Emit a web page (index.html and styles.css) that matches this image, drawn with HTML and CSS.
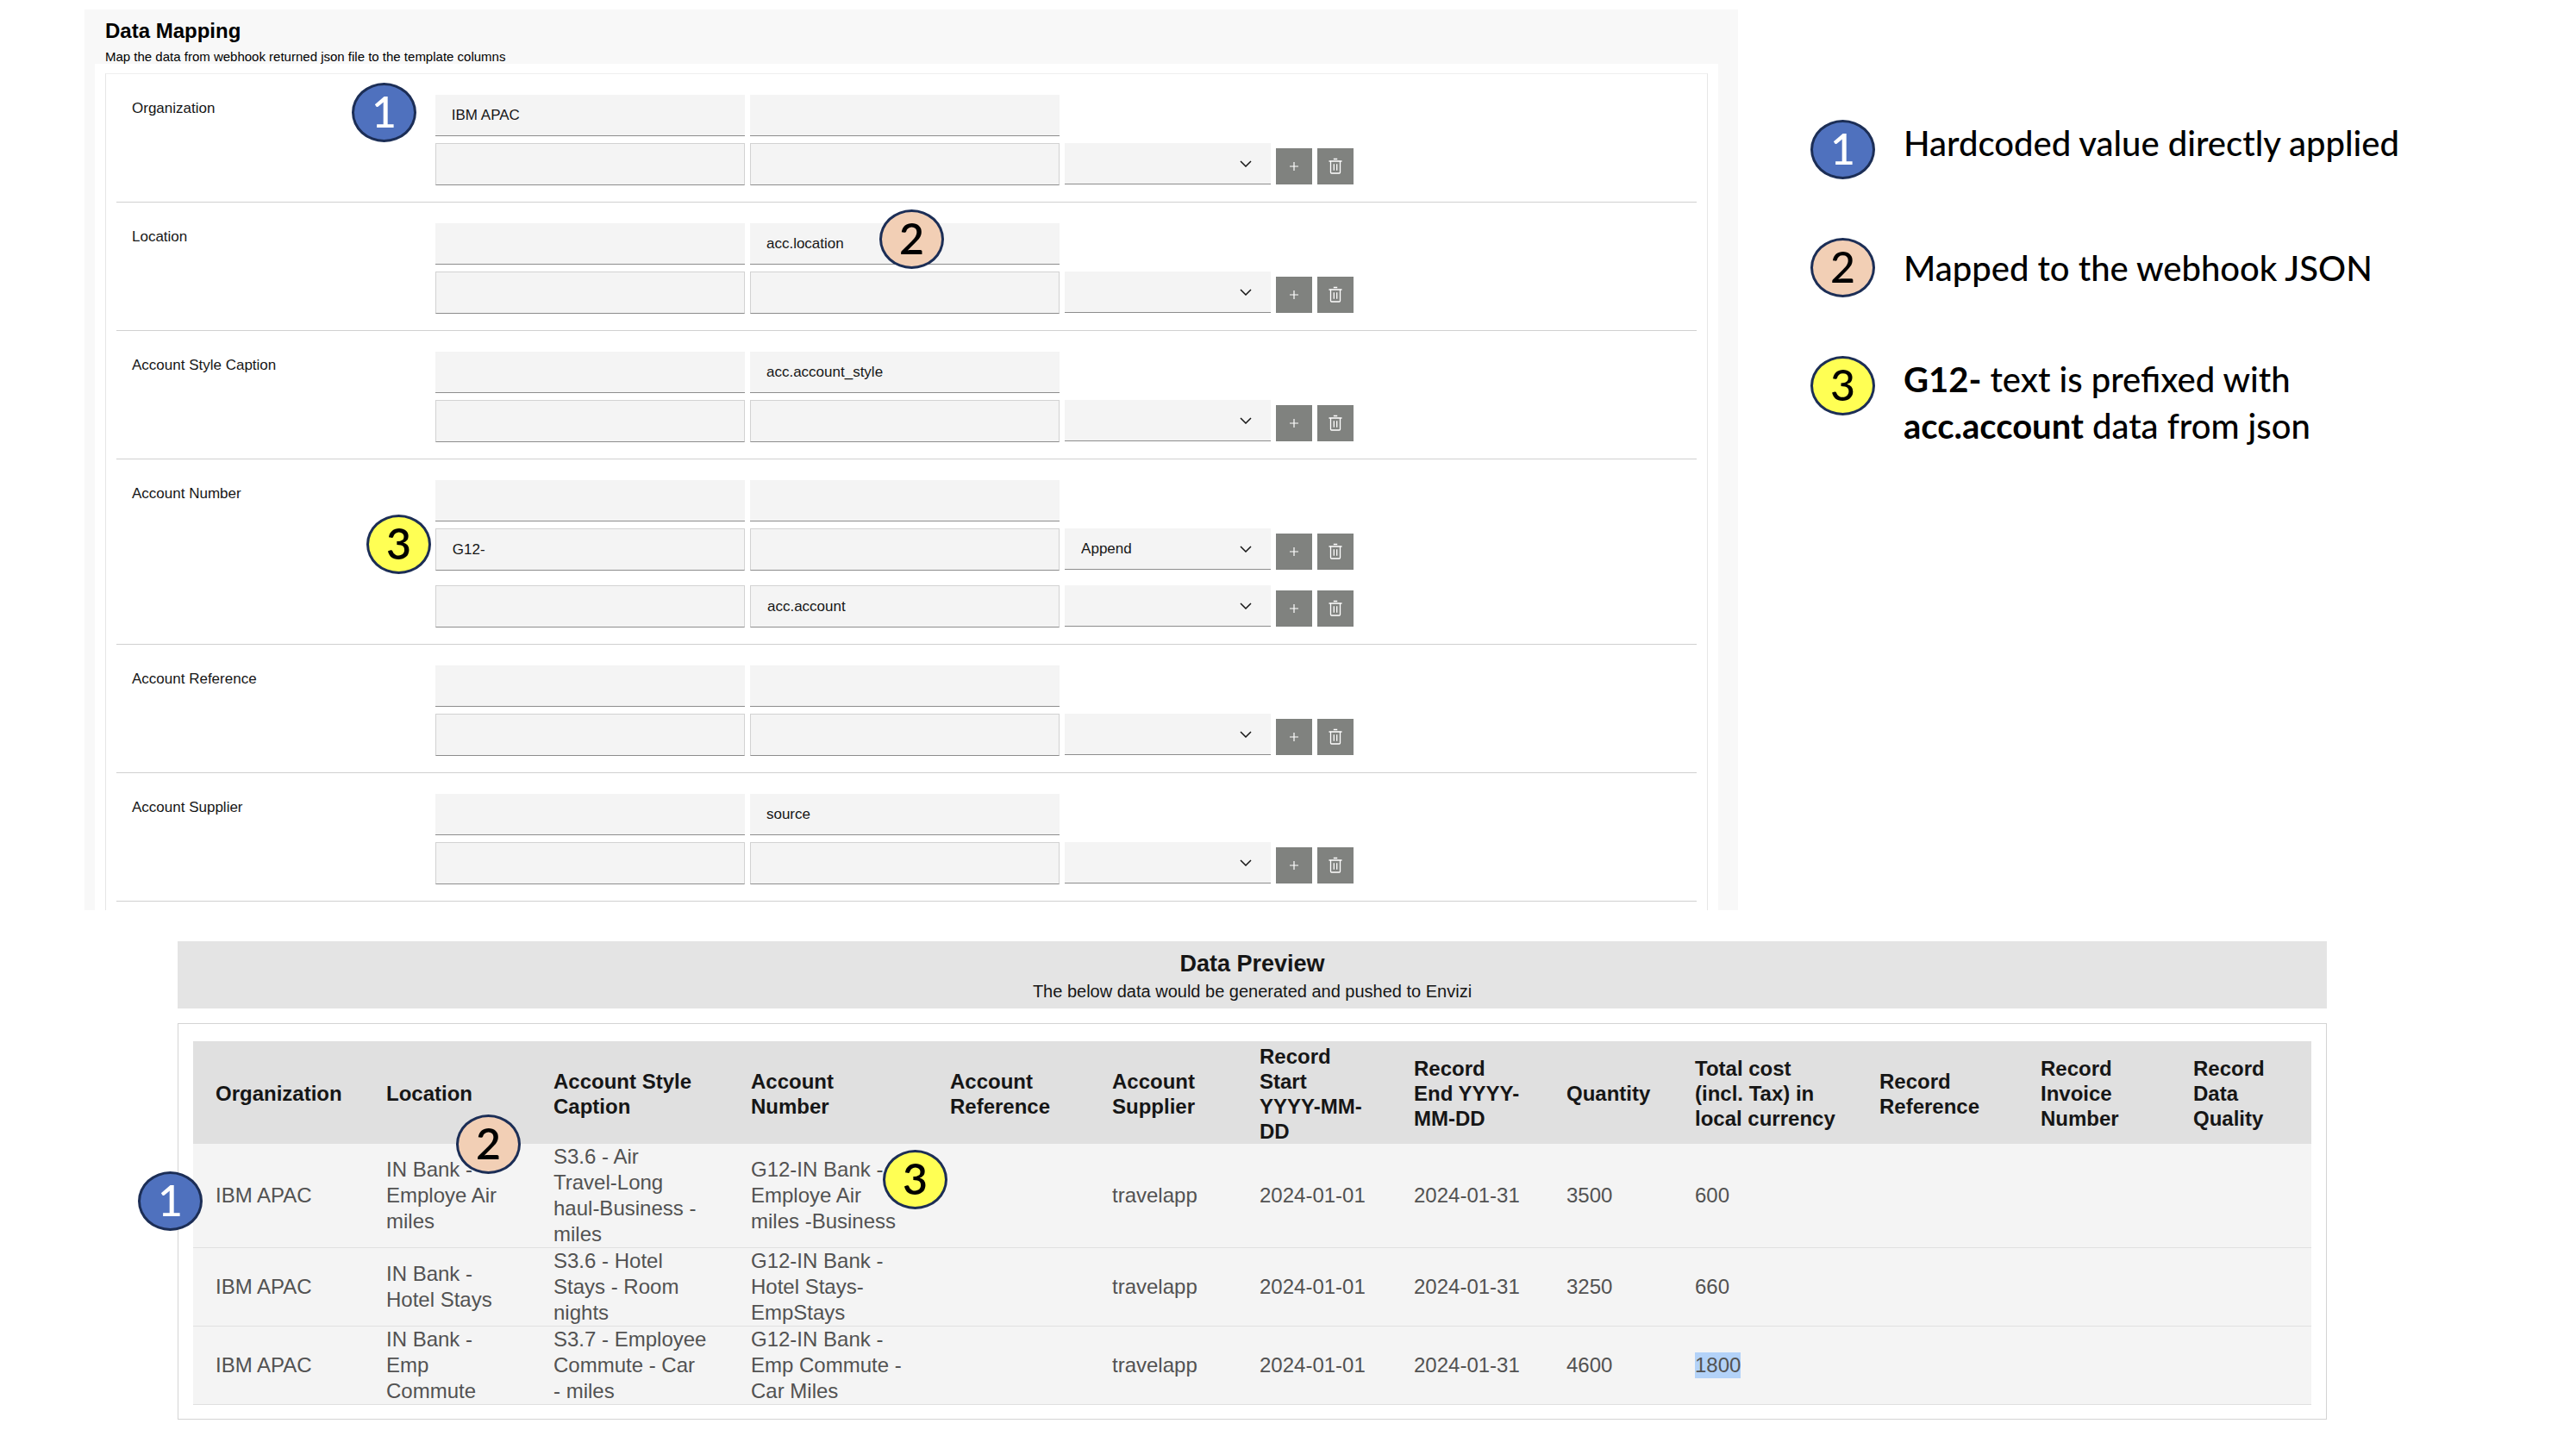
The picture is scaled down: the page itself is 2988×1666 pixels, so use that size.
FILE: index.html
```
<!DOCTYPE html>
<html lang="en">
<head>
<meta charset="utf-8">
<title>Data Mapping</title>
<link rel="stylesheet" href="styles.css">
</head>
<body>
<svg class="sprite" aria-hidden="true">
  <symbol id="plus" viewBox="0 0 16 16"><path d="M8 3v10M3 8h10" fill="none" stroke="currentColor" stroke-width="1.200"/></symbol>
  <symbol id="trash" viewBox="0 0 16 20"><path d="M.5 4h15M5.800 1.500h4.400M2.500 4v13a1 1 0 0 0 1 1h9a1 1 0 0 0 1-1V4M6.300 7.200v7.500M9.700 7.200v7.500" fill="none" stroke="currentColor" stroke-width="1.300"/></symbol>
</svg>
<main class="page">
  <div class="top">
    <section class="mapping">
      <header class="mapping-head">
        <h1>Data Mapping</h1>
        <p>Map the data from webhook returned json file to the template columns</p>
      </header>
      <div class="sheet">
        <form class="card" id="groups">
          <fieldset class="group">
            <legend class="label">Organization</legend>
            <div class="fields">
              <div class="row first"><input type="text" aria-label="Organization value" value="IBM APAC"><input type="text" aria-label="Organization path"></div>
              <div class="row"><input type="text" aria-label="Organization text"><input type="text" aria-label="Organization data"><select aria-label="Organization operation"><option></option><option>Append</option></select><button type="button" aria-label="Add"><svg class="plus"><use href="#plus"/></svg></button><button type="button" aria-label="Delete"><svg class="trash"><use href="#trash"/></svg></button></div>
            </div>
            <span class="badge blue at-org">1</span>
          </fieldset>
          <fieldset class="group">
            <legend class="label">Location</legend>
            <div class="fields">
              <div class="row first"><input type="text" aria-label="Location value"><input type="text" aria-label="Location path" value="acc.location"></div>
              <div class="row"><input type="text" aria-label="Location text"><input type="text" aria-label="Location data"><select aria-label="Location operation"><option></option><option>Append</option></select><button type="button" aria-label="Add"><svg class="plus"><use href="#plus"/></svg></button><button type="button" aria-label="Delete"><svg class="trash"><use href="#trash"/></svg></button></div>
            </div>
            <span class="badge peach at-loc">2</span>
          </fieldset>
          <fieldset class="group">
            <legend class="label">Account Style Caption</legend>
            <div class="fields">
              <div class="row first"><input type="text" aria-label="Style value"><input type="text" aria-label="Style path" value="acc.account_style"></div>
              <div class="row"><input type="text" aria-label="Style text"><input type="text" aria-label="Style data"><select aria-label="Style operation"><option></option><option>Append</option></select><button type="button" aria-label="Add"><svg class="plus"><use href="#plus"/></svg></button><button type="button" aria-label="Delete"><svg class="trash"><use href="#trash"/></svg></button></div>
            </div>
          </fieldset>
          <fieldset class="group">
            <legend class="label">Account Number</legend>
            <div class="fields">
              <div class="row first"><input type="text" aria-label="Number value"><input type="text" aria-label="Number path"></div>
              <div class="row"><input type="text" aria-label="Number text" value="G12-"><input type="text" aria-label="Number data"><select aria-label="Number operation"><option>Append</option></select><button type="button" aria-label="Add"><svg class="plus"><use href="#plus"/></svg></button><button type="button" aria-label="Delete"><svg class="trash"><use href="#trash"/></svg></button></div>
              <div class="row extra"><input type="text" aria-label="Number text 2"><input type="text" aria-label="Number data 2" value="acc.account"><select aria-label="Number operation 2"><option></option><option>Append</option></select><button type="button" aria-label="Add"><svg class="plus"><use href="#plus"/></svg></button><button type="button" aria-label="Delete"><svg class="trash"><use href="#trash"/></svg></button></div>
            </div>
            <span class="badge yellow at-num">3</span>
          </fieldset>
          <fieldset class="group">
            <legend class="label">Account Reference</legend>
            <div class="fields">
              <div class="row first"><input type="text" aria-label="Reference value"><input type="text" aria-label="Reference path"></div>
              <div class="row"><input type="text" aria-label="Reference text"><input type="text" aria-label="Reference data"><select aria-label="Reference operation"><option></option><option>Append</option></select><button type="button" aria-label="Add"><svg class="plus"><use href="#plus"/></svg></button><button type="button" aria-label="Delete"><svg class="trash"><use href="#trash"/></svg></button></div>
            </div>
          </fieldset>
          <fieldset class="group">
            <legend class="label">Account Supplier</legend>
            <div class="fields">
              <div class="row first"><input type="text" aria-label="Supplier value"><input type="text" aria-label="Supplier path" value="source"></div>
              <div class="row"><input type="text" aria-label="Supplier text"><input type="text" aria-label="Supplier data"><select aria-label="Supplier operation"><option></option><option>Append</option></select><button type="button" aria-label="Add"><svg class="plus"><use href="#plus"/></svg></button><button type="button" aria-label="Delete"><svg class="trash"><use href="#trash"/></svg></button></div>
            </div>
          </fieldset>
        </form>
      </div>
    </section>
    <ol class="notes">
      <li><span class="badge blue">1</span><p>Hardcoded value directly applied</p></li>
      <li class="centered"><span class="badge peach">2</span><p>Mapped to the webhook JSON</p></li>
      <li><span class="badge yellow">3</span><p><b>G12-</b> text is prefixed with<br><b>acc.account</b> data from json</p></li>
    </ol>
  </div>

  <section class="preview">
    <header class="preview-head">
      <h2>Data Preview</h2>
      <p>The below data would be generated and pushed to Envizi</p>
    </header>
    <div class="preview-card">
      <table>
        <colgroup><col class="c-org"><col class="c-loc"><col class="c-style"><col class="c-num"><col class="c-ref"><col class="c-sup"><col class="c-start"><col class="c-end"><col class="c-qty"><col class="c-cost"><col class="c-rref"><col class="c-inv"><col class="c-qual"></colgroup>
        <thead>
          <tr><th>Organization</th><th>Location</th><th>Account Style<br>Caption</th><th>Account<br>Number</th><th>Account<br>Reference</th><th>Account<br>Supplier</th><th>Record<br>Start<br>YYYY-MM-<br>DD</th><th>Record<br>End YYYY-<br>MM-DD</th><th>Quantity</th><th>Total cost<br>(incl. Tax) in<br>local currency</th><th>Record<br>Reference</th><th>Record<br>Invoice<br>Number</th><th>Record<br>Data<br>Quality</th></tr>
        </thead>
        <tbody>
          <tr><td>IBM APAC</td><td>IN Bank -<br>Employe Air<br>miles</td><td>S3.6 - Air<br>Travel-Long<br>haul-Business -<br>miles</td><td>G12-IN Bank -<br>Employe Air<br>miles -Business</td><td></td><td>travelapp</td><td>2024-01-01</td><td>2024-01-31</td><td>3500</td><td>600</td><td></td><td></td><td></td></tr>
          <tr><td>IBM APAC</td><td>IN Bank -<br>Hotel Stays</td><td>S3.6 - Hotel<br>Stays - Room<br>nights</td><td>G12-IN Bank -<br>Hotel Stays-<br>EmpStays</td><td></td><td>travelapp</td><td>2024-01-01</td><td>2024-01-31</td><td>3250</td><td>660</td><td></td><td></td><td></td></tr>
          <tr><td>IBM APAC</td><td>IN Bank -<br>Emp<br>Commute</td><td>S3.7 - Employee<br>Commute - Car<br>- miles</td><td>G12-IN Bank -<br>Emp Commute -<br>Car Miles</td><td></td><td>travelapp</td><td>2024-01-01</td><td>2024-01-31</td><td>4600</td><td><mark>1800</mark></td><td></td><td></td><td></td></tr>
        </tbody>
      </table>
      <span class="badge blue at-row">1</span>
      <span class="badge peach at-bank">2</span>
      <span class="badge yellow at-g12">3</span>
    </div>
  </section>
</main>
</body>
</html>
```
FILE: styles.css
```
* { box-sizing: border-box; }
body {
  margin: 0;
  background: #fff;
  color: #161616;
  font-family: "Liberation Sans", Arial, sans-serif;
}
h1, h2, p, ol { margin: 0; padding: 0; }
.sprite { display: none; }
.page { padding-top: 11px; }

.top {
  display: grid;
  grid-template-columns: 1918fr 888fr;
  column-gap: 84px;
  padding-left: 98px;
}

/* mapping panel */
.mapping { background: #f8f8f8; padding: 0 23px 0 12px; }
.mapping-head { height: 63px; padding: 10px 12px 0; color: #000; }
.mapping-head h1 { font-size: 24px; line-height: 30px; }
.mapping-head p { font-size: 15px; line-height: 20px; padding-top: 5px; }
.sheet { background: #fff; padding: 11px 12px 0; }
.card { border: 1px solid #e6e6e6; border-top-color: #eee; border-bottom: 0; padding: 0 12px 10px; }
.group {
  position: relative;
  display: grid;
  grid-template-columns: 352fr 1066fr 398fr;
  margin: 0;
  border: 0;
  border-bottom: 1px solid #d0d0d0;
  padding: 24px 0 19px 18px;
  min-width: 0;
}
.label { float: left; font-size: 17px; line-height: 20px; padding: 6px 0 0; }
.fields { display: grid; row-gap: 8px; }
.row {
  display: grid;
  grid-template-columns: 359fr 359fr 239fr 42px 42px;
  column-gap: 6px;
  align-items: start;
}
.row.extra { margin-top: 9px; }
.row input, .row select {
  appearance: none;
  min-width: 0;
  width: 100%;
  border: 1px solid #d2d2d2;
  border-bottom-color: #8d8d8d;
  border-radius: 0;
  background: #f4f4f4;
  color: #161616;
  font: 17px "Liberation Sans", Arial, sans-serif;
}
.row input { height: 49px; padding: 0 19px; }
.row.first input { height: 48px; border-width: 0 0 1px; }
.row select {
  height: 48px;
  border-width: 0 0 1px;
  padding: 0 19px;
  background: #f4f4f4 url("data:image/svg+xml,%3Csvg xmlns='http://www.w3.org/2000/svg' width='14' height='8'%3E%3Cpath d='M1 1l6 6 6-6' fill='none' stroke='%23161616' stroke-width='1.500'/%3E%3C/svg%3E") no-repeat right 22px center;
}
.row button {
  display: grid;
  place-items: center;
  width: 42px;
  height: 42px;
  margin: 6px 0 0;
  border: 0;
  padding: 0;
  background: #80827f;
  color: #fff;
}
.plus { width: 16px; height: 16px; }
.trash { width: 16px; height: 20px; }

/* numbered markers */
.badge {
  display: block;
  flex: none;
  width: 75px;
  height: 69px;
  border: 3px solid #1c2e56;
  border-radius: 50%;
  font: 500 50px/60px Lato, sans-serif;
  text-align: center;
  color: #000;
}
.blue { background: #4f71be; color: #fff; }
.peach { background: #f2cfb5; }
.yellow { background: #ffff54; }
.at-org, .at-loc, .at-num, .at-row, .at-bank, .at-g12 { position: absolute; }
.at-loc, .at-num, .at-bank, .at-g12 { font-weight: 600; }
.at-org { left: 273px; top: 10px; }
.at-loc { left: 885px; top: 8px; }
.at-num { left: 290px; top: 64px; }

/* explanation list */
.notes { list-style: none; padding-top: 128px; display: flex; flex-direction: column; gap: 68px; }
.notes li { display: flex; align-items: flex-start; gap: 33px; color: #000; }
.notes .centered { align-items: center; }
.notes p { font: 500 40px/54px Lato, sans-serif; }

/* preview */
.preview { margin: 36px 289px 20px 206px; }
.preview-head { background: #e4e4e4; height: 78px; padding-top: 10px; text-align: center; }
.preview-head h2 { font-size: 27px; line-height: 32px; }
.preview-head p { font-size: 20px; line-height: 32px; }
.preview-card {
  position: relative;
  margin-top: 17px;
  border: 1px solid #d4d4d4;
  padding: 20px 17px 16px;
}
table { width: 100%; table-layout: fixed; border-collapse: separate; border-spacing: 0; font-size: 24px; line-height: 30px; }
th { height: 119px; background: #e0e0e0; line-height: 29px; text-align: left; padding: 2px 0 0 26px; white-space: nowrap; }
td { background: #f4f4f4; color: #525252; border-bottom: 1px solid #e0e0e0; padding: 0 0 0 26px; white-space: nowrap; }
mark { display: inline-block; line-height: 30px; background: #b3d2f8; color: inherit; }
.c-org { width: 198px; } .c-loc { width: 194px; } .c-style { width: 229px; } .c-num { width: 231px; }
.c-ref { width: 188px; } .c-sup { width: 171px; } .c-start { width: 179px; } .c-end { width: 177px; }
.c-qty { width: 149px; } .c-cost { width: 214px; } .c-rref { width: 187px; } .c-inv { width: 177px; }
.c-qual { width: 163px; }
.at-row { left: -47px; top: 171px; }
.at-bank { left: 322px; top: 105px; }
.at-g12 { left: 817px; top: 146px; }
```
